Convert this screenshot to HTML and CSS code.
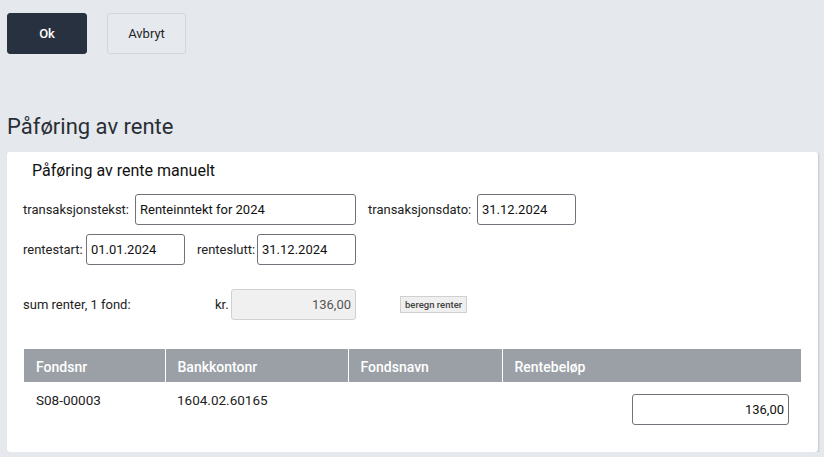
FILE: index.html
```html
<!DOCTYPE html>
<html lang="no">
<head>
  <meta charset="UTF-8">
  <meta name="viewport" content="width=device-width, initial-scale=1.0">
  <title>Påføring av rente</title>
  <link rel="stylesheet" href="styles.css">
</head>
<body>
  <div class="actions">
    <button class="btn btn-primary">Ok</button>
    <button class="btn btn-secondary">Avbryt</button>
  </div>

  <h1 class="page-title">Påføring av rente</h1>

  <div class="panel">
    <h2 class="panel-title">Påføring av rente manuelt</h2>

    <div class="form-row">
      <label class="lbl lbl-tekst">transaksjonstekst:</label>
      <input class="field field-text" type="text" value="Renteinntekt for 2024">
      <label class="lbl lbl-dato">transaksjonsdato:</label>
      <input class="field field-date" type="text" value="31.12.2024">
    </div>

    <div class="form-row">
      <label class="lbl lbl-start">rentestart:</label>
      <input class="field field-date" type="text" value="01.01.2024">
      <label class="lbl lbl-slutt">renteslutt:</label>
      <input class="field field-date" type="text" value="31.12.2024">
    </div>

    <div class="form-row sum-row">
      <span class="lbl sum-label">sum renter, 1 fond:</span>
      <span class="lbl lbl-kr">kr.</span>
      <input class="field field-sum" type="text" value="136,00" readonly>
      <button class="calc-btn">beregn renter</button>
    </div>

    <table class="funds">
      <thead>
        <tr>
          <th class="col-nr">Fondsnr</th>
          <th class="col-konto">Bankkontonr</th>
          <th class="col-navn">Fondsnavn</th>
          <th class="col-belop">Rentebeløp</th>
        </tr>
      </thead>
      <tbody>
        <tr>
          <td>S08-00003</td>
          <td>1604.02.60165</td>
          <td></td>
          <td class="amount"><input class="field field-amount" type="text" value="136,00"></td>
        </tr>
      </tbody>
    </table>
  </div>
</body>
</html>
```

FILE: styles.css
```css
body {
  margin: 0;
  padding: 13px 7px 0;
  background: #e5e8ed;
  font-family: Roboto, "Liberation Sans", sans-serif;
  color: #1f2328;
}

.actions {
  display: flex;
  gap: 20px;
}

.btn {
  height: 41px;
  border-radius: 3px;
  font-family: inherit;
  font-size: 13px;
  cursor: pointer;
}

.btn-primary {
  width: 80px;
  background: #283140;
  border: 1px solid #283140;
  color: #fff;
  font-weight: 500;
}

.btn-secondary {
  width: 79px;
  background: #e6e9ed;
  border: 1px solid #d3d6da;
  color: #1f2328;
}

.page-title {
  margin: 60px 0 0;
  height: 38px;
  font-size: 22px;
  font-weight: 400;
  color: #2a2f36;
}

.panel {
  width: 811px;
  box-sizing: border-box;
  background: #fff;
  border-radius: 3px;
  box-shadow: 1px 1px 2px rgba(0, 0, 0, 0.15);
  padding: 9px 16px 27px 16px;
}

.panel-title {
  margin: 0 0 14px 9px;
  font-size: 16px;
  font-weight: 400;
  color: #111;
}

.form-row {
  display: flex;
  align-items: center;
  margin-bottom: 9px;
}

.lbl {
  font-size: 13px;
  color: #222;
  white-space: nowrap;
}

.lbl-tekst { width: 112px; }
.lbl-dato { width: 109px; margin-left: 12px; }
.lbl-start { width: 63px; }
.lbl-slutt { width: 60px; margin-left: 12px; }

.field {
  height: 31px;
  box-sizing: border-box;
  border: 1px solid #6f747a;
  border-radius: 3px;
  padding: 0 4px;
  font-family: inherit;
  font-size: 13px;
  color: #111;
  background: #fff;
}

.field-text {
  width: 221px;
}

.field-date {
  width: 99px;
}

.sum-row {
  margin-top: 24px;
  margin-bottom: 29px;
}

.sum-label {
  width: 192px;
}

.lbl-kr {
  width: 16px;
}

.field-sum {
  width: 125px;
  text-align: right;
  background: #f0f0f0;
  border-color: #ced1d4;
  color: #555;
}

.calc-btn {
  margin-left: 44px;
  height: 17px;
  padding: 0 4px;
  font-family: inherit;
  font-size: 9.5px;
  font-weight: 500;
  color: #444;
  background: #efefef;
  border: 1px solid #d0d0d0;
  border-radius: 0;
}

.funds {
  width: 777px;
  margin-left: 1px;
  border-collapse: collapse;
  table-layout: fixed;
  font-size: 13.5px;
}

.funds th {
  box-sizing: border-box;
  height: 33px;
  padding: 2px 12px 0;
  background: #9aa0a6;
  color: #fff;
  font-size: 14px;
  font-weight: 500;
  text-align: left;
  border-left: 1px solid #fff;
}

.funds th:first-child {
  border-left: none;
}

.col-nr { width: 141px; }
.col-konto { width: 183px; }
.col-navn { width: 154px; }

.funds td {
  padding: 10px 12px 0;
  vertical-align: top;
  color: #222;
}

.funds td.amount {
  text-align: right;
  padding-top: 12px;
}

.field-amount {
  width: 157px;
  text-align: right;
}
```
